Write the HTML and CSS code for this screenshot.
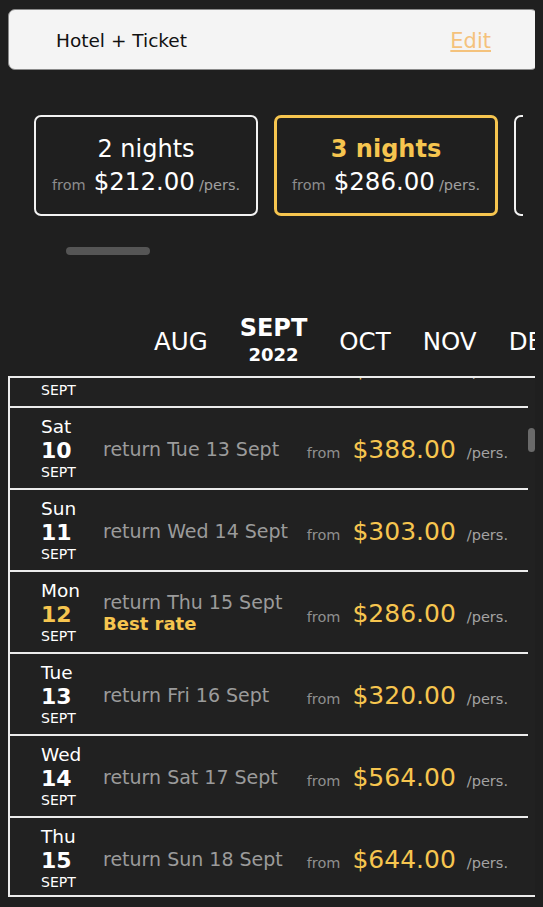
FILE: index.html
```html
<!DOCTYPE html>
<html lang="en">
<head>
<meta charset="utf-8">
<title>Hotel + Ticket</title>
<link rel="stylesheet" href="styles.css">
</head>
<body>
<div class="page">
  <header class="summary">
    <span class="summary-title">Hotel + Ticket</span>
    <a class="summary-edit" href="#">Edit</a>
  </header>

  <div class="durations">
    <div class="duration">
      <div class="duration-title">2 nights</div>
      <div class="duration-price"><span class="from">from</span><span class="amount">$212.00</span><span class="pers">/pers.</span></div>
    </div>
    <div class="duration duration-active">
      <div class="duration-title">3 nights</div>
      <div class="duration-price"><span class="from">from</span><span class="amount">$286.00</span><span class="pers">/pers.</span></div>
    </div>
    <div class="duration">
      <div class="duration-title">4 nights</div>
      <div class="duration-price"><span class="from">from</span><span class="amount">$352.00</span><span class="pers">/pers.</span></div>
    </div>
  </div>
  <div class="durations-scroll"></div>

  <nav class="months">
    <span class="month">AUG</span>
    <span class="month month-active"><span class="month-name">SEPT</span><span class="month-year">2022</span></span>
    <span class="month">OCT</span>
    <span class="month">NOV</span>
    <span class="month">DEC</span>
  </nav>

  <div class="dates">
    <div class="dates-inner">
      <div class="date-row">
        <div class="day"><span class="day-name">Fri</span><span class="day-num">9</span><span class="day-month">SEPT</span></div>
        <div class="return">return Mon 12 Sept</div>
        <div class="price"><span class="from">from</span><span class="amount">$318.00</span><span class="pers">/pers.</span></div>
      </div>
      <div class="date-row">
        <div class="day"><span class="day-name">Sat</span><span class="day-num">10</span><span class="day-month">SEPT</span></div>
        <div class="return">return Tue 13 Sept</div>
        <div class="price"><span class="from">from</span><span class="amount">$388.00</span><span class="pers">/pers.</span></div>
      </div>
      <div class="date-row">
        <div class="day"><span class="day-name">Sun</span><span class="day-num">11</span><span class="day-month">SEPT</span></div>
        <div class="return">return Wed 14 Sept</div>
        <div class="price"><span class="from">from</span><span class="amount">$303.00</span><span class="pers">/pers.</span></div>
      </div>
      <div class="date-row">
        <div class="day"><span class="day-name">Mon</span><span class="day-num day-num-best">12</span><span class="day-month">SEPT</span></div>
        <div class="return">return Thu 15 Sept<span class="best">Best rate</span></div>
        <div class="price"><span class="from">from</span><span class="amount">$286.00</span><span class="pers">/pers.</span></div>
      </div>
      <div class="date-row">
        <div class="day"><span class="day-name">Tue</span><span class="day-num">13</span><span class="day-month">SEPT</span></div>
        <div class="return">return Fri 16 Sept</div>
        <div class="price"><span class="from">from</span><span class="amount">$320.00</span><span class="pers">/pers.</span></div>
      </div>
      <div class="date-row">
        <div class="day"><span class="day-name">Wed</span><span class="day-num">14</span><span class="day-month">SEPT</span></div>
        <div class="return">return Sat 17 Sept</div>
        <div class="price"><span class="from">from</span><span class="amount">$564.00</span><span class="pers">/pers.</span></div>
      </div>
      <div class="date-row">
        <div class="day"><span class="day-name">Thu</span><span class="day-num">15</span><span class="day-month">SEPT</span></div>
        <div class="return">return Sun 18 Sept</div>
        <div class="price"><span class="from">from</span><span class="amount">$644.00</span><span class="pers">/pers.</span></div>
      </div>
    </div>
    <div class="dates-thumb"></div>
  </div>
</div>
</body>
</html>
```

FILE: styles.css
```css
* {
  box-sizing: border-box;
}

html,
body {
  background: #1f1f1f;
}

body {
  margin: 8px;
  font-family: "DejaVu Sans", Verdana, sans-serif;
  color: #ffffff;
}

.page {
  width: 530px;
}

/* Summary bar */
.summary {
  margin-top: 1px;
  height: 61px;
  display: flex;
  align-items: center;
  justify-content: space-between;
  padding: 2px 46px 0 47px;
  background: #f4f4f4;
  border: 1px solid #8a8a8a;
  border-radius: 7px;
}

.summary-title {
  font-size: 18.5px;
  color: #111111;
}

.summary-edit {
  font-size: 21px;
  color: #f4c27c;
  text-decoration: underline;
}

/* Duration carousel */
.durations {
  margin-top: 45px;
  width: 515px;
  overflow: hidden;
  display: flex;
  gap: 16px;
  padding-left: 26px;
}

.duration {
  flex: none;
  width: 224px;
  height: 101px;
  border: 2px solid #f2f2f2;
  border-radius: 7px;
  padding-top: 17px;
  display: flex;
  flex-direction: column;
  align-items: center;
  gap: 3px;
}

.duration-active {
  border: 3px solid #f6c54f;
  padding-top: 16px;
}

.duration-title {
  font-size: 24px;
  line-height: 30px;
}

.duration-active .duration-title {
  font-weight: bold;
  color: #f6c54f;
}

.duration-price {
  display: flex;
  align-items: baseline;
  line-height: 30px;
  white-space: nowrap;
}

.duration-price .from {
  font-size: 14.5px;
  color: #8c8c8c;
  margin-right: 8px;
}

.duration-price .amount {
  font-size: 24.5px;
}

.duration-price .pers {
  font-size: 14.5px;
  color: #a0a0a0;
  margin-left: 4px;
}

.durations-scroll {
  margin: 31px 0 0 58px;
  width: 84px;
  height: 8px;
  border-radius: 4px;
  background: #555555;
}

/* Month tabs */
.months {
  margin-top: 60px;
  display: flex;
  align-items: center;
  gap: 32px;
  padding-left: 146px;
  overflow: hidden;
  white-space: nowrap;
}

.month {
  flex: none;
  font-size: 24.5px;
  line-height: 28px;
}

.month-active {
  display: flex;
  flex-direction: column;
  align-items: center;
  font-weight: bold;
  font-size: 24px;
}

.month-name {
  line-height: 27px;
}

.month-year {
  font-size: 18px;
  line-height: 26px;
}

/* Date list */
.dates {
  position: relative;
  margin-top: 8px;
  height: 521px;
  border: 2px solid #ececec;
  overflow: hidden;
  background: #212121;
}

.dates-inner {
  margin-top: -52px;
  margin-right: 8px;
}

.date-row {
  height: 82px;
  display: flex;
  align-items: center;
  padding: 2px 20px 0 31px;
  border-bottom: 2px solid #ececec;
}

.day {
  flex: none;
  width: 62px;
  display: flex;
  flex-direction: column;
  margin-top: -2px;
}

.day-name {
  font-size: 18.5px;
  line-height: 22px;
}

.day-num {
  font-size: 22px;
  font-weight: bold;
  line-height: 26px;
}

.day-num-best {
  color: #f6c54f;
}

.day-month {
  font-size: 14px;
  line-height: 16px;
}

.return {
  flex: 1;
  display: flex;
  flex-direction: column;
  font-size: 19px;
  line-height: 22px;
  color: #9b9b9b;
}

.best {
  font-size: 18px;
  font-weight: bold;
  color: #f6c54f;
}

.price {
  display: flex;
  align-items: baseline;
  gap: 11px;
  white-space: nowrap;
}

.price .from {
  font-size: 14.5px;
  color: #8f8f8f;
  margin-right: 1px;
}

.price .amount {
  font-size: 25px;
  color: #f6c54f;
}

.price .pers {
  font-size: 14.5px;
  color: #a3a3a3;
}

.dates-thumb {
  position: absolute;
  top: 50px;
  right: 1px;
  width: 7px;
  height: 24px;
  border-radius: 4px;
  background: #6a6a6a;
}
```
